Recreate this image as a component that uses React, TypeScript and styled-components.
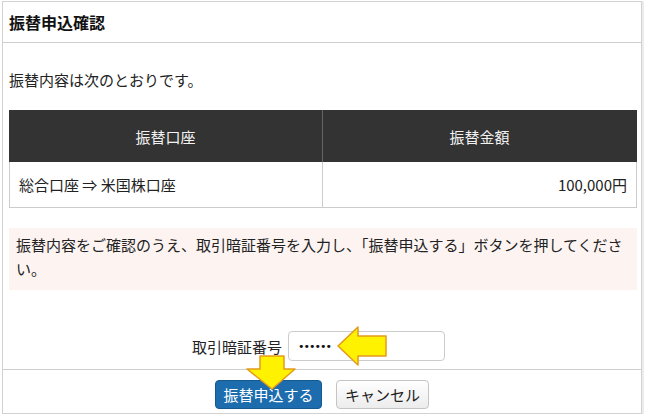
import React from "react";
import styled, { createGlobalStyle } from "styled-components";

const Global = createGlobalStyle`
  html, body { margin: 0; padding: 0; background: #ffffff; }
  body { font-family: "Noto Sans CJK JP", "Noto Sans", sans-serif; color: #222; }
`;

const Frame = styled.div`
  position: relative;
  margin: 1px 6px 0 2px;
  width: 640px;
  height: 413px;
  border: 1px solid #d2d2d2;
  box-shadow: 2px 0 0 #ececec;
  box-sizing: border-box;
  display: flex;
  flex-direction: column;
`;

const Header = styled.div`
  height: 41px;
  box-sizing: border-box;
  border-bottom: 1px solid #cfcfcf;
  padding: 0 6px;
  display: flex;
  align-items: center;
  font-size: 16px;
  font-weight: 700;
  color: #111;
`;

const Body = styled.div`
  padding: 25px 5px 0 6px;
  display: flex;
  flex-direction: column;
`;

const Lead = styled.p`
  margin: 0;
  font-size: 15px;
  line-height: 24px;
  color: #222;
`;

const Table = styled.div`
  margin-top: 18px;
  display: grid;
  grid-template-columns: 314px 314px;
  width: 628px;
`;

const Th = styled.div<{ $last?: boolean }>`
  height: 52px;
  background: #333333;
  color: #f2f2f2;
  font-size: 15px;
  display: flex;
  align-items: center;
  justify-content: center;
  border-right: 1px solid ${(p) => (p.$last ? "#333" : "#666")};
  box-sizing: border-box;
`;

const Td = styled.div<{ $right?: boolean }>`
  height: 46px;
  box-sizing: border-box;
  border-bottom: 1px solid #cccccc;
  border-left: ${(p) => (p.$right ? "none" : "1px solid #cccccc")};
  border-right: 1px solid #cccccc;
  display: flex;
  align-items: center;
  justify-content: ${(p) => (p.$right ? "flex-end" : "flex-start")};
  padding: 0 9px;
  font-size: 15px;
  color: #222;
`;

const Notice = styled.div`
  margin-top: 20px;
  width: 628px;
  box-sizing: border-box;
  background: #fdf4f2;
  padding: 5px 5px 9px 7px;
  font-size: 15px;
  line-height: 24px;
  color: #222;
`;

const InputRow = styled.div`
  margin-top: 41px;
  display: flex;
  align-items: center;
  justify-content: center;
  gap: 6px;
  padding-right: 8px;
  font-size: 15px;
`;

const Label = styled.span`
  color: #222;
`;

const Field = styled.div`
  width: 157px;
  height: 30px;
  box-sizing: border-box;
  border: 1px solid #cccccc;
  border-radius: 4px;
  background: #fff;
  display: flex;
  align-items: center;
  padding-left: 9px;
  font-size: 11px;
  letter-spacing: -1px;
  color: #111;
  font-family: "DejaVu Sans", sans-serif;
`;

const Footer = styled.div`
  margin-top: 8px;
  border-top: 1px solid #cfcfcf;
  padding-top: 10px;
  display: flex;
  justify-content: center;
  gap: 14px;
`;

const Button = styled.button<{ $primary?: boolean }>`
  height: 29px;
  box-sizing: border-box;
  border-radius: 4px;
  font-family: "Noto Sans CJK JP", sans-serif;
  font-size: 15px;
  padding: 0;
  white-space: nowrap;
  cursor: pointer;
  display: flex;
  align-items: center;
  border: 1px solid ${(p) => (p.$primary ? "#155a8f" : "#c4c4c4")};
  background: ${(p) =>
    p.$primary ? "#1c6cae" : "linear-gradient(#ffffff, #ececec)"};
  color: ${(p) => (p.$primary ? "#ffffff" : "#222")};
  width: ${(p) => (p.$primary ? "107px" : "93px")};
  justify-content: center;
`;

const Arrow = styled.svg`
  position: absolute;
  pointer-events: none;
`;

export default function App() {
  return (
    <>
      <Global />
      <Frame>
        <Header>振替申込確認</Header>
        <Body>
          <Lead>振替内容は次のとおりです。</Lead>
          <Table>
            <Th>振替口座</Th>
            <Th $last>振替金額</Th>
            <Td>総合口座 ⇒ 米国株口座</Td>
            <Td $right>100,000円</Td>
          </Table>
          <Notice>
            振替内容をご確認のうえ、取引暗証番号を入力し、「振替申込する」ボタンを押してください。
          </Notice>
          <InputRow>
            <Label>取引暗証番号</Label>
            <Field>••••••</Field>
          </InputRow>
        </Body>
        <Footer>
          <Button $primary>振替申込する</Button>
          <Button>キャンセル</Button>
        </Footer>
        {/* left arrow */}
        <Arrow
          style={{ left: 333, top: 322 }}
          width="52"
          height="42"
          viewBox="0 0 52 42"
        >
          <polygon
            points="2,22 22,3 22,12 50,12 50,32 22,32 22,41"
            fill="#fff200"
            stroke="#e39a1c"
            strokeWidth="1.5"
            strokeLinejoin="round"
          />
        </Arrow>
        {/* down arrow */}
        <Arrow
          style={{ left: 241, top: 353 }}
          width="52"
          height="36"
          viewBox="0 0 52 36"
        >
          <polygon
            points="16,1 40,1 40,14 51,14 28,34 3,14 16,14"
            fill="#fff200"
            stroke="#e39a1c"
            strokeWidth="1.5"
            strokeLinejoin="round"
          />
        </Arrow>
      </Frame>
    </>
  );
}
